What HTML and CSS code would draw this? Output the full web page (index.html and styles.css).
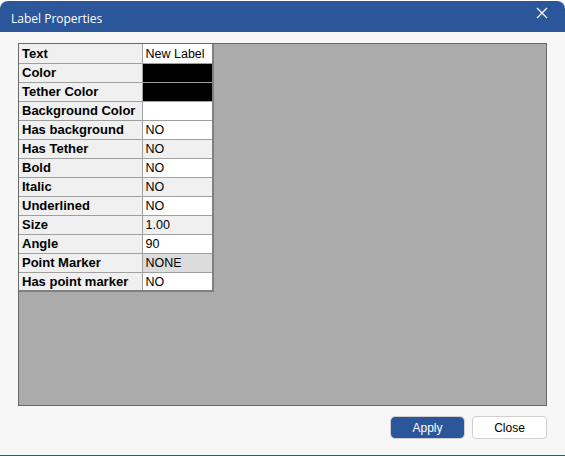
FILE: index.html
```html
<!DOCTYPE html>
<html lang="en">
<head>
  <meta charset="UTF-8" />
  <title>Label Properties</title>
  <link rel="stylesheet" href="styles.css">
</head>
<body>
  <div class="window">
    <div class="titlebar">
      <span class="title">Label Properties</span>
      <span class="close-x">
        <svg width="12" height="12" viewBox="0 0 12 12"><path d="M1 1 L11 11 M11 1 L1 11" stroke="#fff" stroke-width="1.2" fill="none"/></svg>
      </span>
    </div>
    <div class="content">
      <div class="grid-area">
        <table class="props">
          <tr><td class="name">Text</td><td class="val">New Label</td></tr>
          <tr><td class="name">Color</td><td class="val black"></td></tr>
          <tr><td class="name">Tether Color</td><td class="val black"></td></tr>
          <tr><td class="name">Background Color</td><td class="val"></td></tr>
          <tr><td class="name">Has background</td><td class="val">NO</td></tr>
          <tr><td class="name">Has Tether</td><td class="val ro">NO</td></tr>
          <tr><td class="name">Bold</td><td class="val">NO</td></tr>
          <tr><td class="name">Italic</td><td class="val ro">NO</td></tr>
          <tr><td class="name">Underlined</td><td class="val">NO</td></tr>
          <tr><td class="name">Size</td><td class="val ro">1.00</td></tr>
          <tr><td class="name">Angle</td><td class="val">90</td></tr>
          <tr><td class="name">Point Marker</td><td class="val combo">NONE</td></tr>
          <tr><td class="name">Has point marker</td><td class="val">NO</td></tr>
        </table>
      </div>
      <div class="buttons">
        <button class="btn apply">Apply</button>
        <button class="btn">Close</button>
      </div>
    </div>
  </div>
</body>
</html>
```

FILE: styles.css
```css
html, body {
  margin: 0;
  padding: 0;
  background: #fff;
}
body {
  width: 565px;
  height: 456px;
  overflow: hidden;
  font-family: "Liberation Sans", Arial, sans-serif;
}
.window {
  margin-top: 1px;
  height: 455px;
  background: #f7f7f7;
  border-radius: 8px 8px 0 0;
  border-bottom: 1px solid #2b579a;
  box-sizing: border-box;
  overflow: hidden;
  display: flex;
  flex-direction: column;
}
.titlebar {
  height: 31px;
  background: #2b579a;
  color: #fff;
  display: flex;
  align-items: center;
  justify-content: space-between;
  flex-shrink: 0;
}
.title {
  font-family: "Open Sans", "Noto Sans", sans-serif;
  font-size: 12px;
  padding-left: 11px;
  padding-top: 3px;
}
.close-x {
  width: 12px;
  height: 12px;
  margin-right: 17px;
  margin-bottom: 8px;
  display: flex;
}
.content {
  flex: 1;
  padding: 11px 18px 0 18px;
  display: flex;
  flex-direction: column;
}
.grid-area {
  width: 529px;
  height: 363px;
  box-sizing: border-box;
  background: #ababab;
  border: 1px solid #696969;
}
.props {
  border-collapse: collapse;
  border-right: 2px solid #808080;
  border-bottom: 2px solid #808080;
  font-size: 12px;
}
.props td {
  height: 19px;
  padding: 1px 3px 0 3px;
  box-sizing: border-box;
  border: 1px solid #a0a0a0;
  white-space: nowrap;
  line-height: 16px;
}
.props tr:first-child td {
  border-top: none;
}
.props td.name {
  border-left: none;
  width: 123px;
  background: #f0f0f0;
  font-weight: bold;
  font-size: 13px;
  color: #000;
}
.props td.val {
  width: 71px;
  background: #fff;
  color: #000;
  font-size: 12.5px;
}
.props td.ro {
  background: #f0f0f0;
}
.props td.black {
  background: #000;
}
.props td.combo {
  background: #dcdcdc;
}
.buttons {
  display: flex;
  justify-content: flex-end;
  gap: 8px;
  margin-top: 10px;
}
.btn {
  width: 75px;
  height: 23px;
  font-family: "Liberation Sans", Arial, sans-serif;
  font-size: 12px;
  background: #fff;
  color: #000;
  border: 1px solid #cfcfcf;
  border-radius: 4px;
}
.apply {
  width: 73px;
  height: 21px;
  margin-top: 1px;
  background: #2b579a;
  color: #fff;
  border: 1px solid #2b579a;
  box-shadow: 0 0 0 1px #cfcfcf;
}
```
